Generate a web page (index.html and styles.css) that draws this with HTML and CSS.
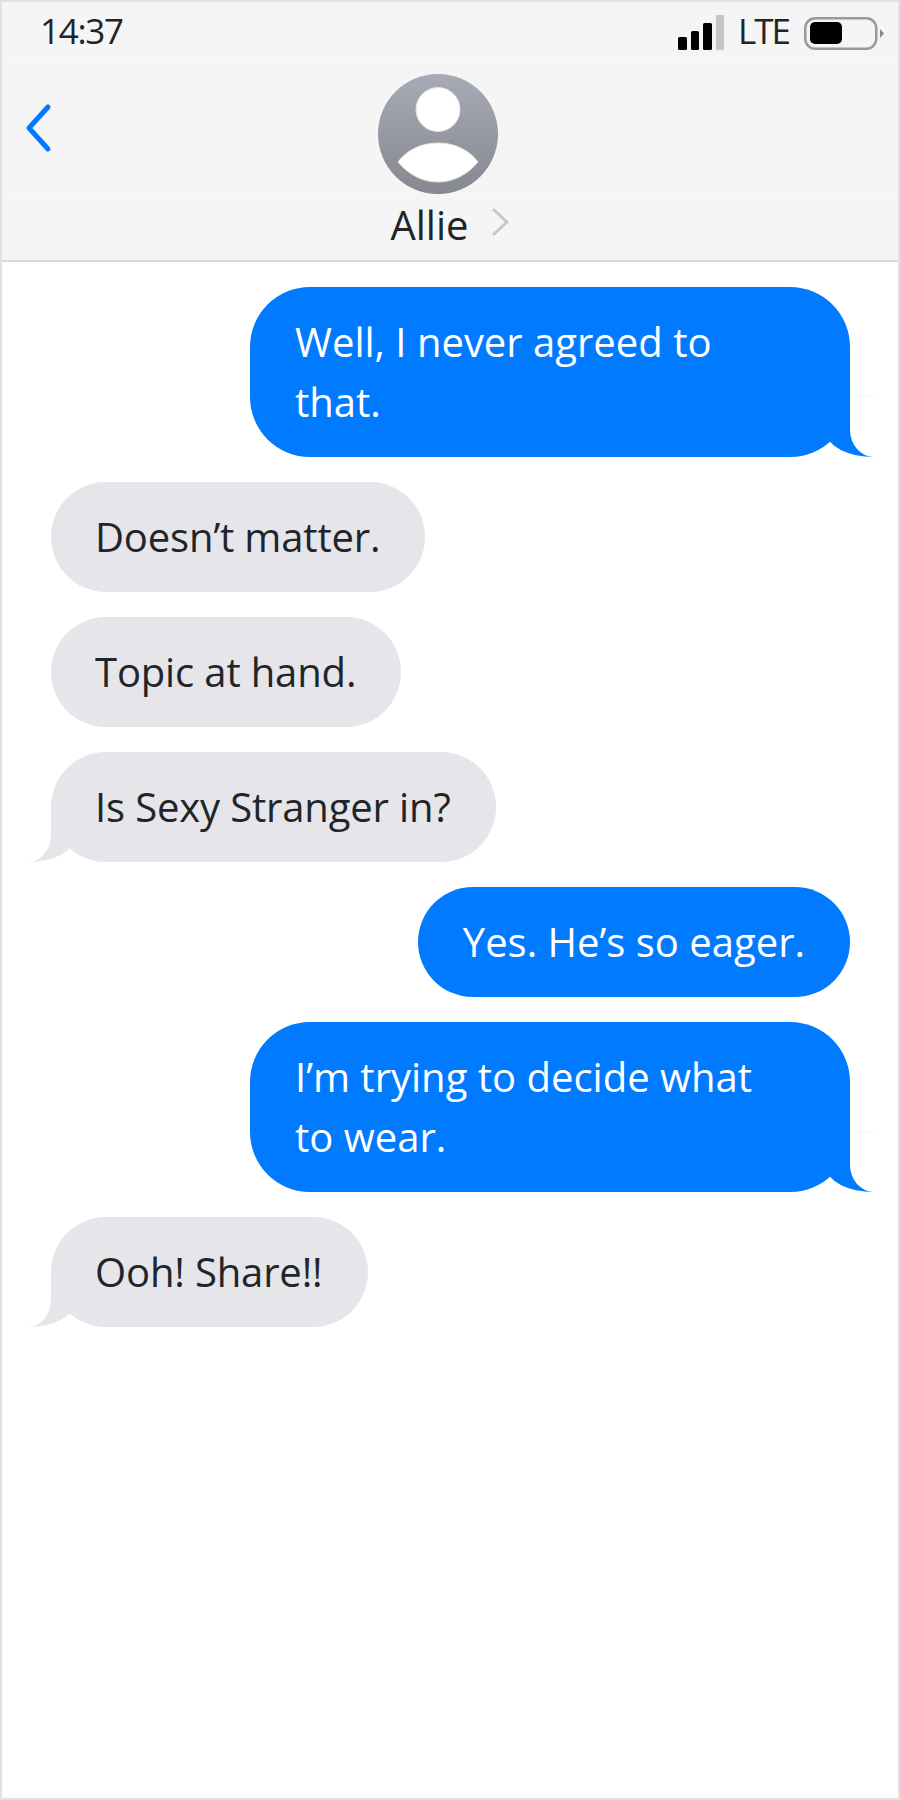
FILE: index.html
```html
<!DOCTYPE html>
<html lang="en">
<head>
  <meta charset="UTF-8">
  <meta name="viewport" content="width=device-width, initial-scale=1.0">
  <title>Messages</title>
  <link rel="stylesheet" href="styles.css">
</head>
<body>

  <div id="phone">
    <div id="header">
      <div class="status-bar">
        <span class="time">14:37</span>
        <div class="status-right">
          <svg class="signal" width="46" height="35" viewBox="0 0 46 35">
            <rect x="0" y="22" width="9" height="13" rx="1.500" fill="#000"/>
            <rect x="13" y="16" width="8" height="19" rx="1.500" fill="#000"/>
            <rect x="25" y="8" width="9" height="27" rx="1.500" fill="#000"/>
            <rect x="38" y="0" width="8" height="35" rx="1.500" fill="#c6c6c6"/>
          </svg>
          <span class="lte">LTE</span>
          <svg class="battery" width="81" height="34" viewBox="0 0 81 34">
            <rect x="1.250" y="1.250" width="71" height="30.500" rx="10" fill="none" stroke="#9a9a9a" stroke-width="2.500"/>
            <rect x="6" y="5" width="32" height="22" rx="5" fill="#000"/>
            <path d="M76 12 L80 16.500 L76 21 Z" fill="#8a8a8a"/>
          </svg>
        </div>
      </div>
      <div class="nav-row">
        <svg class="back" width="28" height="50" viewBox="0 0 28 50">
          <path d="M23 4 L4 25 L23 46" fill="none" stroke="#007bff" stroke-width="5" stroke-linecap="round" stroke-linejoin="round"/>
        </svg>
        <svg class="avatar" width="120" height="120" viewBox="0 0 120 120">
          <defs>
            <linearGradient id="avatarFill" x1="0" y1="0" x2="0" y2="1">
              <stop offset="0" stop-color="#a8abb6"/>
              <stop offset="1" stop-color="#85888f"/>
            </linearGradient>
          </defs>
          <circle cx="60" cy="60" r="60" fill="url(#avatarFill)"/>
          <circle cx="60" cy="35.500" r="22" fill="#fff" stroke="#e8e6d8" stroke-width="1"/>
          <path d="M20 88 C28 77 42 69 60 69 C78 69 92 77 100 88 C90 100 76 108 60 108 C44 108 30 100 20 88 Z" fill="#fff" stroke="#e8e6d8" stroke-width="1"/>
        </svg>
      </div>
      <div class="name-row">
        <span class="name">Allie</span>
        <svg class="chevron" width="18" height="28" viewBox="0 0 18 28">
          <path d="M2 2 L15 14 L2 26" fill="none" stroke="#c6c6c8" stroke-width="3" stroke-linecap="round" stroke-linejoin="round"/>
        </svg>
      </div>
    </div>

    <div id="messages">
      <div class="bubble sent long tail">Well, I never agreed to<br>that.</div>
      <div class="bubble received">Doesn’t matter.</div>
      <div class="bubble received">Topic at hand.</div>
      <div class="bubble received tail">Is Sexy Stranger in?</div>
      <div class="bubble sent">Yes. He’s so eager.</div>
      <div class="bubble sent long tail">I’m trying to decide what<br>to wear.</div>
      <div class="bubble received tail">Ooh! Share!!</div>
    </div>
  </div>

</body>
</html>
```

FILE: styles.css
```css
* {
  box-sizing: border-box;
}

body {
  margin: 0;
  font-family: 'Open Sans', 'Noto Sans', sans-serif;
  color: #212529;
  background-color: #fff;
}

#phone {
  height: 1800px;
  border: 2px solid #dee2e6;
  overflow: hidden;
}

#header {
  height: 260px;
  background-color: #f5f5f5;
  border-bottom: 2px solid #d8d8d8;
}

.status-bar {
  height: 60px;
  display: flex;
  align-items: center;
  justify-content: space-between;
  padding: 0 13px 0 38px;
  border-bottom: 1px solid #f8f8f8;
}

.time,
.lte {
  font-size: 35px;
  line-height: 50px;
  margin-top: -2px;
}

.time {
  letter-spacing: -1.300px;
}

.lte {
  letter-spacing: -2px;
  margin-right: 15px;
}

.status-right {
  display: flex;
  align-items: center;
}

.signal {
  margin-top: 2px;
  margin-right: 14px;
}

.battery {
  margin-top: 5px;
}

.nav-row {
  height: 132px;
  display: grid;
  grid-template-columns: 1fr auto 1fr;
  align-items: end;
  padding: 0 27px 0 23px;
  border-bottom: 1px solid #f8f8f8;
}

.avatar {
  grid-column: 2;
  grid-row: 1;
  margin-right: 20px;
  margin-bottom: -1px;
}

.back {
  grid-column: 1;
  grid-row: 1;
  margin-bottom: 40px;
}

.name-row {
  height: 66px;
  display: flex;
  align-items: center;
  justify-content: center;
  padding-bottom: 10px;
}

.name {
  font-size: 40px;
  line-height: 56px;
  margin-top: 6px;
  margin-right: 23px;
}

#messages {
  display: flex;
  flex-direction: column;
  gap: 25px;
  padding: 25px 48px 25px 49px;
}

.bubble {
  position: relative;
  max-width: 600px;
  padding: 25px 45px;
  border-radius: 60px;
  font-size: 40px;
  line-height: 60px;
}

.long {
  width: 600px;
}

.sent {
  align-self: flex-end;
  background-color: #007bff;
  color: #fff;
}

.received {
  align-self: flex-start;
  padding-left: 44px;
  background-color: #e5e5ea;
  letter-spacing: -0.150px;
}

.tail::before,
.tail::after {
  content: "";
  position: absolute;
  bottom: 0;
  height: 60px;
}

.sent.tail::before {
  right: -24px;
  width: 47px;
  background-color: #007bff;
  border-bottom-left-radius: 47px 24px;
}

.sent.tail::after {
  right: -24px;
  width: 24px;
  background-color: #fff;
  border-top: 1px solid #f5f8ff;
  border-bottom-left-radius: 24px 27px;
}

.received.tail::before {
  left: -23px;
  width: 46px;
  background-color: #e5e5ea;
  border-bottom-right-radius: 46px 24px;
}

.received.tail::after {
  left: -23px;
  width: 23px;
  background-color: #fff;
  border-bottom-right-radius: 23px 27px;
}
```
